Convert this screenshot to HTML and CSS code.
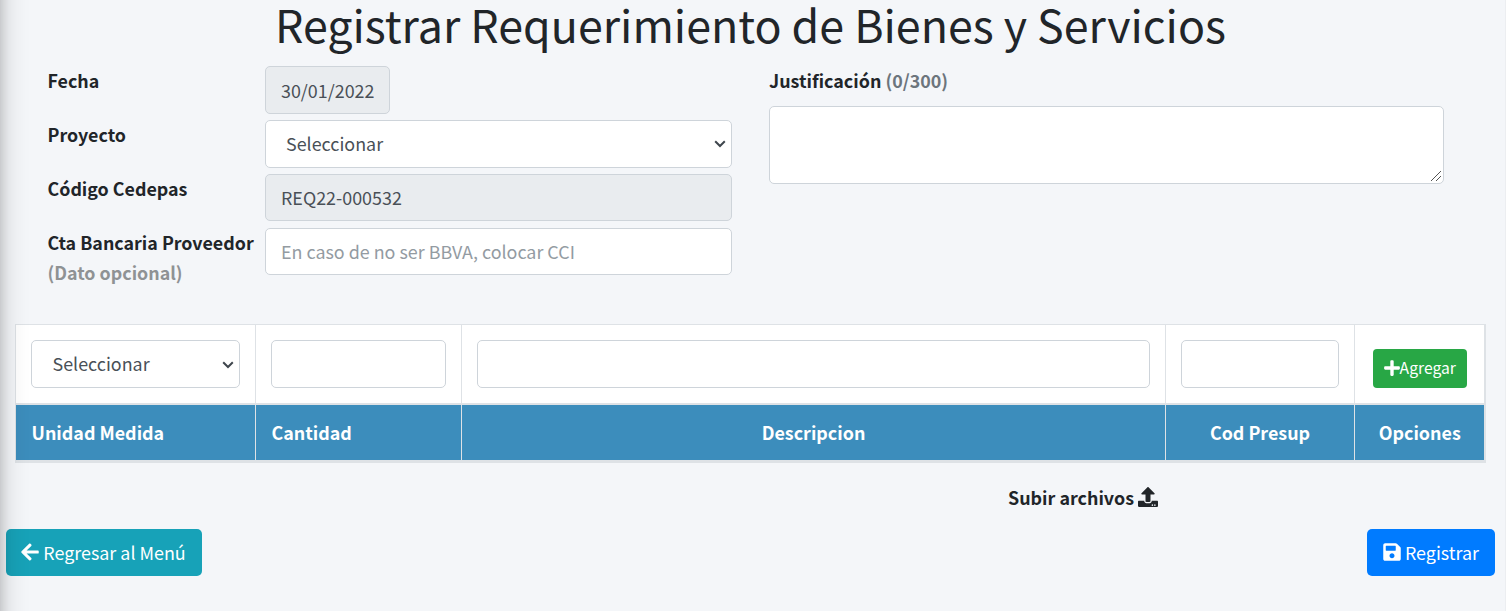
FILE: index.html
```html
<!DOCTYPE html>
<html lang="es">
<head>
<meta charset="utf-8">
<title>Registrar Requerimiento</title>
<link rel="stylesheet" href="styles.css">
</head>
<body>
<div class="sidebar-shadow"></div>
<main class="page">
  <h1 class="title">Registrar Requerimiento de Bienes y Servicios</h1>
  <section class="form">
    <div class="fields">
      <label class="label" for="fecha">Fecha</label>
      <input class="control control-date" id="fecha" value="30/01/2022" disabled>
      <label class="label" for="proyecto">Proyecto</label>
      <div class="select-wrap"><select class="control control-select" id="proyecto"><option>Seleccionar</option></select><svg class="chevron" viewBox="0 0 12 8"><path d="M1.200 1.300L6 6L10.800 1.300" fill="none" stroke="currentColor" stroke-width="2"/></svg></div>
      <label class="label" for="codigo">Código Cedepas</label>
      <input class="control short" id="codigo" value="REQ22-000532" readonly>
      <label class="label" for="cuenta">Cta Bancaria Proveedor <span class="optional">(Dato opcional)</span></label>
      <input class="control short" id="cuenta" placeholder="En caso de no ser BBVA, colocar CCI">
    </div>
    <div class="reason">
      <label class="label" for="justificacion">Justificación <span class="counter">(0/300)</span></label>
      <div class="area-wrap"><textarea class="control control-area" id="justificacion"></textarea><svg class="grip" viewBox="0 0 12 12"><path d="M1 11L11 1M6 11L11 6" fill="none" stroke="currentColor" stroke-width="1"/></svg></div>
    </div>
  </section>
  <table class="items">
    <colgroup><col class="c1"><col class="c2"><col class="c3"><col class="c4"><col class="c5"></colgroup>
    <tbody>
      <tr class="entry">
        <td><div class="select-wrap"><select class="control control-select unit"><option>Seleccionar</option></select><svg class="chevron" viewBox="0 0 12 8"><path d="M1.200 1.300L6 6L10.800 1.300" fill="none" stroke="currentColor" stroke-width="2"/></svg></div></td>
        <td><input class="control"></td>
        <td><input class="control"></td>
        <td><input class="control"></td>
        <td class="action"><button class="btn btn-add"><svg class="icon-plus" viewBox="0 0 448 512"><path fill="currentColor" d="M416 208H272V64c0-17.670-14.330-32-32-32h-32c-17.670 0-32 14.330-32 32v144H32c-17.670 0-32 14.330-32 32v32c0 17.670 14.330 32 32 32h144v144c0 17.670 14.330 32 32 32h32c17.670 0 32-14.330 32-32V304h144c17.670 0 32-14.330 32-32v-32c0-17.670-14.330-32-32-32z"/></svg><span>Agregar</span></button></td>
      </tr>
      <tr class="heads">
        <th class="left">Unidad Medida</th>
        <th class="left">Cantidad</th>
        <th>Descripcion</th>
        <th>Cod Presup</th>
        <th class="options">Opciones</th>
      </tr>
    </tbody>
  </table>
  <div class="upload"><span>Subir archivos</span><svg class="icon-upload" viewBox="0 0 512 512"><path fill="currentColor" d="M296 384h-80c-13.300 0-24-10.700-24-24V192h-87.700c-17.800 0-26.700-21.500-14.100-34.100L242.300 5.700c7.500-7.500 19.800-7.500 27.300 0l152.200 152.200c12.600 12.600 3.700 34.100-14.100 34.100H320v168c0 13.300-10.700 24-24 24zm216-8v112c0 13.300-10.700 24-24 24H24c-13.300 0-24-10.700-24-24V376c0-13.300 10.700-24 24-24h136v8c0 30.900 25.100 56 56 56h80c30.900 0 56-25.100 56-56v-8h136c13.300 0 24 10.700 24 24zm-124 88c0-11-9-20-20-20s-20 9-20 20 9 20 20 20 20-9 20-20zm64 0c0-11-9-20-20-20s-20 9-20 20 9 20 20 20 20-9 20-20z"/></svg></div>
  <footer class="actions">
    <button class="btn btn-back"><svg class="icon" viewBox="0 0 448 512"><path fill="currentColor" d="M257.500 445.100l-22.200 22.200c-9.400 9.400-24.600 9.400-33.900 0L7 273c-9.400-9.400-9.400-24.600 0-33.900L201.400 44.700c9.400-9.400 24.600-9.400 33.900 0l22.200 22.200c9.500 9.500 9.300 25-.4 34.300L136.600 216H424c13.300 0 24 10.700 24 24v32c0 13.300-10.700 24-24 24H136.600l120.500 114.800c9.800 9.300 10 24.800.4 34.300z"/></svg><span>Regresar al Menú</span></button>
    <button class="btn btn-save"><svg class="icon" viewBox="0 0 448 512"><path fill="currentColor" d="M433.941 129.941l-83.882-83.882A48 48 0 0 0 316.118 32H48C21.490 32 0 53.490 0 80v352c0 26.510 21.490 48 48 48h352c26.510 0 48-21.490 48-48V163.882a48 48 0 0 0-14.059-33.941zM224 416c-35.346 0-64-28.654-64-64 0-35.346 28.654-64 64-64s64 28.654 64 64c0 35.346-28.654 64-64 64zm96-304.520V212c0 6.627-5.373 12-12 12H76c-6.627 0-12-5.373-12-12V108c0-6.627 5.373-12 12-12h228.520c3.183 0 6.235 1.264 8.485 3.515l3.480 3.480A11.996 11.996 0 0 1 320 111.480z"/></svg><span>Registrar</span></button>
  </footer>
</main>
</body>
</html>
```
FILE: styles.css
```css
* { box-sizing: border-box; }

body {
  margin: 0;
  height: 611px;
  overflow: hidden;
  background: #f4f6f9;
  color: #212529;
  font-family: "Noto Sans CJK SC", "Open Sans", sans-serif;
  font-size: 17.9px;
  line-height: 30px;
}

.sidebar-shadow {
  position: fixed;
  z-index: 2;
  top: -100px;
  bottom: -100px;
  left: -100px;
  width: 100px;
  box-shadow: 0 14px 28px rgba(0, 0, 0, .2), 0 10px 12px rgba(0, 0, 0, .17);
  pointer-events: none;
}

.page {
  height: 611px;
  border-right: 1px solid #eceef1;
}

.title {
  margin: 0 0 18px;
  padding-right: 4px;
  font-size: 44.75px;
  font-weight: 400;
  line-height: 47px;
  text-align: center;
  white-space: nowrap;
}

.form {
  display: grid;
  grid-template-columns: 684px 675px;
  column-gap: 37px;
  padding-left: 48px;
  height: 259px;
}

.fields {
  display: grid;
  grid-template-columns: 217px 467px;
  grid-template-rows: 54px 54px 54px 60px;
  align-content: start;
}

.label { margin-left: -.5px; font-size: 17.85px; font-weight: 700; }
.reason .label { margin-left: 0; font-size: 17.9px; }
.optional { display: block; color: #8f9294; }
.counter { color: #6c757d; }

.control {
  display: block;
  width: 100%;
  height: 48px;
  margin: 0;
  padding: 7px 15px;
  border: 1px solid #ced4da;
  border-radius: 5px;
  outline: 0;
  background: #fff;
  color: #495057;
  font: inherit;
}

.fields .control { margin-top: 1px; }
.control::placeholder { color: #939ba2; opacity: 1; }
.control:disabled, .control:read-only:not(select) { background: #e9ecef; }
.short { height: 47px; padding: 6px 15px 8px; }
.control-date { width: 125px; }
.control-select { padding: 6px 0 8px 20px; appearance: none; }
.unit { padding-left: 20.5px; }
.control-area { height: 78px; resize: none; }
.area-wrap { margin-top: 11px; }

.select-wrap, .area-wrap { position: relative; }
.chevron {
  position: absolute;
  right: 6px;
  top: 21px;
  width: 12px;
  height: 8px;
  color: #3f464d;
  pointer-events: none;
}
.grip {
  position: absolute;
  right: 2px;
  bottom: 2px;
  width: 12px;
  height: 12px;
  color: #555;
  pointer-events: none;
}

.items {
  width: 1470px;
  margin-left: 15px;
  table-layout: fixed;
  border-collapse: collapse;
  border: 1px solid #dee2e6;
  border-right-width: 2px;
  border-bottom-width: 3px;
}

.c1 { width: 240px; }
.c2 { width: 206px; }
.c3 { width: 704px; }
.c4 { width: 189px; }
.c5 { width: 130px; }

.items td, .items th { border-left: 1px solid #dee2e6; padding: 0 15px; }
.entry { height: 79px; background: #fff; }
.heads { height: 58px; background: #3c8dbc; color: #fff; }
.heads th { padding-bottom: 1px; border-top: 2px solid #dee2e6; }
.items .left { padding-left: 15.5px; text-align: left; }
.items .action { padding: 9px 0 0 1px; text-align: center; }
.items .options { padding-left: 16px; }

.btn {
  display: inline-flex;
  align-items: center;
  justify-content: center;
  border: 0;
  border-radius: 5px;
  color: #fff;
  font: inherit;
  white-space: nowrap;
}

.btn-add {
  width: 94px;
  height: 39px;
  padding: 0 0 1px;
  border-radius: 4px;
  background: #28a745;
  font-size: 15.7px;
}

.icon { width: 18px; height: 20px; margin-right: 4px; }
.icon-plus { width: 16px; height: 18px; }
.icon-upload { width: 20px; height: 20px; margin-left: 4px; }

.upload {
  display: flex;
  align-items: center;
  height: 30px;
  margin: 19px 0 17px 1008px;
  font-weight: 700;
}

.actions {
  display: flex;
  justify-content: space-between;
  padding: 0 10px 0 6px;
}

.actions .btn { height: 47px; padding: 0 0 2px; }
.actions .btn-back { width: 196px; padding-right: 1px; background: #17a2b8; }
.btn-save { width: 128px; background: #007bff; }
```
